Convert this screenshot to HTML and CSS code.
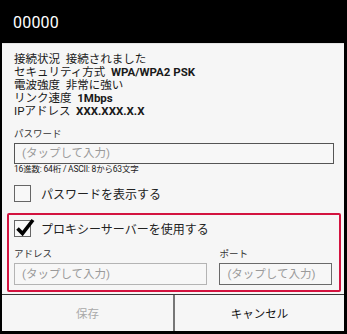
FILE: index.html
```html
<!DOCTYPE html>
<html lang="ja">
<head>
<meta charset="utf-8">
<link rel="stylesheet" href="styles.css">
</head>
<body>
<div class="dialog">
  <header class="title">00000</header>
  <div class="content">
    <div class="info">
      <div>接続状況&nbsp; 接続されました</div>
      <div>セキュリティ方式&nbsp; <b>WPA/WPA2 PSK</b></div>
      <div>電波強度&nbsp; 非常に強い</div>
      <div>リンク速度&nbsp; <b>1Mbps</b></div>
      <div>IPアドレス&nbsp; <b>XXX.XXX.X.X</b></div>
    </div>
    <div class="label pw-label">パスワード</div>
    <div class="input dark">(タップして入力)</div>
    <div class="hint">16進数: 64桁 / ASCII: 8から63文字</div>
    <div class="check show-pw"><span class="box"></span><span class="check-text">パスワードを表示する</span></div>
    <div class="proxy">
      <div class="check"><span class="box"><svg class="tick" width="20" height="20" viewBox="0 0 20 20"><path d="M2.5 10.5 L7.5 15.5 L18 2" fill="none" stroke="#000" stroke-width="3.6" stroke-linejoin="miter"/></svg></span><span class="check-text">プロキシーサーバーを使用する</span></div>
      <div class="proxy-fields">
        <div class="pf addr">
          <div class="label">アドレス</div>
          <div class="input light">(タップして入力)</div>
        </div>
        <div class="pf port">
          <div class="label">ポート</div>
          <div class="input mid">(タップして入力)</div>
        </div>
      </div>
    </div>
  </div>
  <div class="buttons">
    <div class="btn disabled">保存</div>
    <div class="btn">キャンセル</div>
  </div>
</div>
</body>
</html>
```

FILE: styles.css
```css
* { box-sizing: border-box; }
html, body { margin: 0; padding: 0; }
body {
  width: 347px;
  height: 334px;
  background: #000;
  font-family: Roboto, "Noto Sans CJK JP", sans-serif;
  color: #222;
  overflow: hidden;
}
.dialog {
  margin: 0 2px 0 2px;
  width: 342px;
  height: 331px;
  background: #f6f6f6;
  display: flex;
  flex-direction: column;
}
.title {
  height: 43px;
  background: #000;
  color: #fff;
  font-size: 16px;
  padding: 13px 0 0 11px;
  line-height: 20px;
  border-bottom: 1px solid #000;
  letter-spacing: 0.2px;
}
.content {
  flex: 1;
  padding: 9px 3px 0 5px;
  border-top: 1px solid #e4e4e4;
}
.info {
  padding-left: 7px;
  font-size: 11.5px;
  line-height: 13px;
  color: #1a1a1a;
}
.info b { font-weight: 700; }
.label {
  font-size: 9.5px;
  line-height: 12px;
  color: #333;
}
.pw-label {
  margin: 10px 0 3px 7px;
}
.input {
  height: 21px;
  border: 1px solid #555;
  font-size: 11.5px;
  line-height: 19px;
  color: #9a9a9a;
  padding-left: 7px;
  background: #f7f7f7;
}
.content > .input.dark { margin-left: 7px; width: 320px; }
.input.light { border-color: #b4b4b4; }
.input.mid { border-color: #6a6a6a; }
.hint {
  margin-left: 7px;
  font-size: 8.5px;
  line-height: 11px;
  color: #222;
  letter-spacing: -0.2px;
}
.check {
  display: flex;
  align-items: center;
  height: 17px;
}
.show-pw { margin: 10px 0 0 7px; }
.box {
  position: relative;
  width: 17px;
  height: 17px;
  border: 1.5px solid #666;
  background: #f8f8f8;
  flex: none;
}
.tick {
  position: absolute;
  left: 0px;
  top: -3px;
}
.check-text {
  margin-left: 10px;
  font-size: 12px;
  color: #222;
}
.proxy {
  margin-top: 11px;
  border: 2px solid #d3133f;
  border-radius: 2px;
  padding: 5px 7px 5px 5px;
}
.proxy-fields {
  display: flex;
  gap: 12px;
  margin-top: 11px;
}
.pf .label { margin-bottom: 3px; }
.pf .input { height: 22px; line-height: 20px; }
.addr { width: 194px; }
.port { width: 113px; }
.buttons {
  height: 37px;
  border-top: 1px solid #3a3a3a;
  display: flex;
}
.btn {
  flex: 1;
  display: flex;
  align-items: center;
  justify-content: center;
  font-size: 11.5px;
  color: #111;
}
.btn.disabled {
  color: #aaa;
  border-right: 2px solid #777;
  flex: 0 0 173px;
}
```
